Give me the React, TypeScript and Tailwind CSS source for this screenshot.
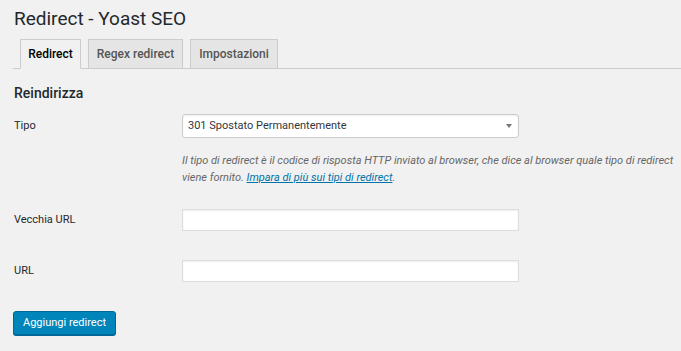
import React from "react";

export default function App() {
  const font = { fontFamily: 'Roboto, "Noto Sans", sans-serif' };
  return (
    <div className="w-[681px] h-[351px] bg-[#f1f1f1] text-[#23282d] overflow-hidden" style={font}>
      <div className="pl-[13px] pt-[5px]">
        <h1 className="text-[19px] leading-[28px] font-normal text-[#23282d] pl-[1px]">Redirect - Yoast SEO</h1>
        <div className="mt-[7px] flex items-end border-b border-[#cccccc] h-[29px] pl-[7px] gap-[7px]">
          <div className="h-[30px] -mb-px w-[61px] text-center border border-[#cccccc] border-b-[#f1f1f1] bg-[#f1f1f1] text-[12px] font-medium leading-[28px] text-[#000]">Redirect</div>
          <div className="h-[29px] w-[95px] text-center border border-b-0 border-[#cccccc] bg-[#e5e5e5] text-[12px] font-medium leading-[28px] text-[#555]">Regex redirect</div>
          <div className="h-[29px] w-[88px] text-center border border-b-0 border-[#cccccc] bg-[#e5e5e5] text-[12px] font-medium leading-[28px] text-[#555]">Impostazioni</div>
        </div>
        <div className="pl-[1px]">
          <h2 className="mt-[14px] text-[14px] leading-[20px] font-medium text-[#23282d]">Reindirizza</h2>
          <div className="mt-[11px] flex">
            <div className="w-[168px] text-[11px] leading-[24px] text-[#23282d]">Tipo</div>
            <div className="flex flex-col">
              <div className="relative w-[337px] h-[24px] bg-white border border-[#cccccc] rounded-[3px] shadow-[inset_0_1px_2px_rgba(0,0,0,0.07)] text-[11px] leading-[22px] pl-[5px] text-[#32373c]">
                301 Spostato Permanentemente
                <svg className="absolute right-[6px] top-[9px]" width="6" height="4" viewBox="0 0 6 4">
                  <path d="M0 0 L6 0 L3 4 Z" fill="#777" />
                </svg>
              </div>
              <p className="mt-[14px] w-[499px] whitespace-nowrap text-[11px] leading-[17px] italic text-[#666]">
                Il tipo di redirect è il codice di risposta HTTP inviato al browser, che dice al browser quale tipo di redirect
                <br />
                viene fornito. <span className="text-[#0073aa] underline">Impara di più sui tipi di redirect</span>.
              </p>
            </div>
          </div>
          <div className="mt-[23px] flex items-center">
            <div className="w-[168px] text-[11px] text-[#23282d]">Vecchia URL</div>
            <div className="w-[337px] h-[22px] bg-white border border-[#dddddd] shadow-[inset_0_1px_2px_rgba(0,0,0,0.07)]" />
          </div>
          <div className="mt-[29px] flex items-center">
            <div className="w-[168px] text-[11px] text-[#23282d]">URL</div>
            <div className="w-[337px] h-[22px] bg-white border border-[#dddddd] shadow-[inset_0_1px_2px_rgba(0,0,0,0.07)]" />
          </div>
        </div>
        <button className="mt-[29px] h-[24px] w-[103px] rounded-[3px] bg-[#0085ba] border border-[#006799] shadow-[0_1px_0_#006799] text-white text-[11px] leading-[22px]">Aggiungi redirect</button>
      </div>
    </div>
  );
}
